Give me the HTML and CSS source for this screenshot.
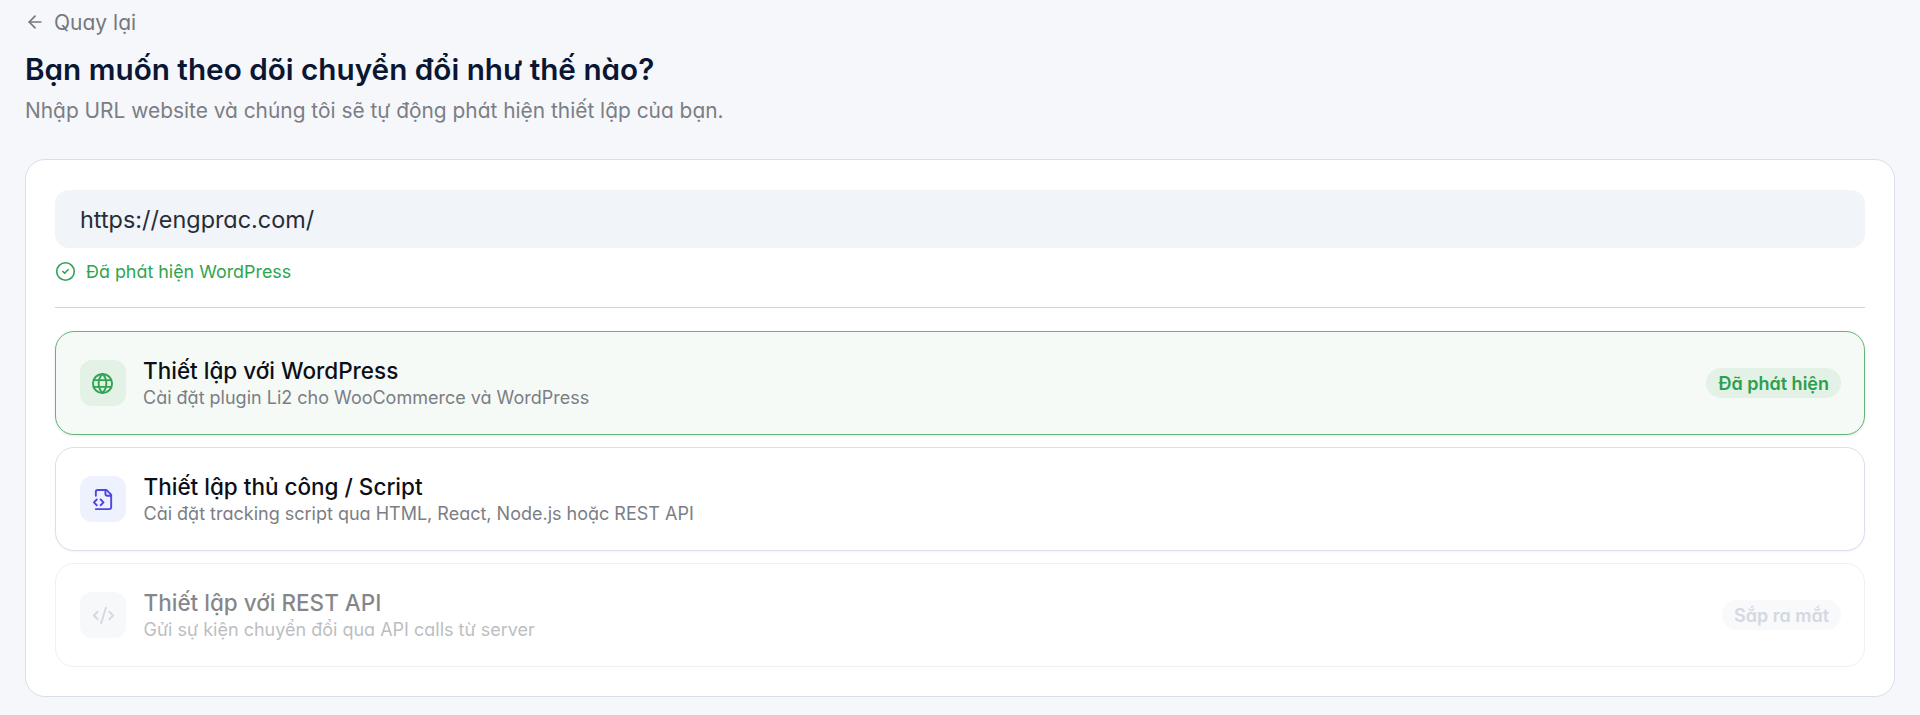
FILE: index.html
```html
<!DOCTYPE html>
<html lang="vi">
<head>
    <meta charset="UTF-8">
    <meta name="viewport" content="width=device-width, initial-scale=1.0">
    <title>Theo dõi chuyển đổi</title>
    <link rel="stylesheet" href="styles.css">
</head>
<body>

    <a class="back-link" href="#">
        <svg class="back-icon" viewBox="0 0 24 24"><path d="m12 19-7-7 7-7"/><path d="M19 12H5"/></svg>
        <span>Quay lại</span>
    </a>

    <h1>Bạn muốn theo dõi chuyển đổi như thế nào?</h1>
    <p class="subtitle">Nhập URL website và chúng tôi sẽ tự động phát hiện thiết lập của bạn.</p>

    <div class="card">
        <input class="url-input" type="text" value="https://engprac.com/">

        <div class="status">
            <svg class="status-icon" viewBox="0 0 24 24"><circle cx="12" cy="12" r="10"/><path d="m9 12 2 2 4-4"/></svg>
            <span>Đã phát hiện WordPress</span>
        </div>

        <hr class="divider">

        <div class="options">
            <div class="option selected">
                <div class="option-icon green">
                    <svg viewBox="0 0 24 24"><circle cx="12" cy="12" r="10"/><path d="M12 2a14.5 14.5 0 0 0 0 20 14.5 14.5 0 0 0 0-20"/><path d="M2.8 8.5h18.4"/><path d="M2.8 15.5h18.4"/></svg>
                </div>
                <div class="option-text">
                    <div class="option-title">Thiết lập với WordPress</div>
                    <div class="option-desc">Cài đặt plugin Li2 cho WooCommerce và WordPress</div>
                </div>
                <span class="badge green">Đã phát hiện</span>
            </div>

            <div class="option">
                <div class="option-icon blue">
                    <svg viewBox="0 0 24 24"><path d="M4 22h14a2 2 0 0 0 2-2V7l-5-5H6a2 2 0 0 0-2 2v4"/><path d="M14 2v4a2 2 0 0 0 2 2h4"/><path d="m5 12-3 3 3 3"/><path d="m9 18 3-3-3-3"/></svg>
                </div>
                <div class="option-text">
                    <div class="option-title">Thiết lập thủ công / Script</div>
                    <div class="option-desc">Cài đặt tracking script qua HTML, React, Node.js hoặc REST API</div>
                </div>
            </div>

            <div class="option disabled">
                <div class="option-icon gray">
                    <svg viewBox="0 0 24 24"><path d="m18 16 4-4-4-4"/><path d="m6 8-4 4 4 4"/><path d="m14.5 4-5 16"/></svg>
                </div>
                <div class="option-text">
                    <div class="option-title">Thiết lập với REST API</div>
                    <div class="option-desc">Gửi sự kiện chuyển đổi qua API calls từ server</div>
                </div>
                <span class="badge gray">Sắp ra mắt</span>
            </div>
        </div>
    </div>

</body>
</html>
```

FILE: styles.css
```css
* {
    box-sizing: border-box;
}
body {
    margin: 0;
    padding: 10px 25px 0;
    background-color: #f5f7fa;
    font-family: Inter, "Noto Sans", sans-serif;
    font-feature-settings: "cv11";
    color: #0f172a;
}
svg {
    fill: none;
    stroke: currentColor;
    stroke-width: 2;
    stroke-linecap: round;
    stroke-linejoin: round;
}
.back-link {
    display: flex;
    align-items: center;
    gap: 9px;
    height: 24px;
    color: #75787f;
    font-size: 21px;
    text-decoration: none;
}
.back-icon {
    width: 20px;
    height: 20px;
}
h1 {
    margin: 16px 0 0;
    font-size: 29.7px;
    line-height: 38px;
    font-weight: 600;
    color: #0b1633;
}
.subtitle {
    margin: 9px 0 0;
    font-size: 20.9px;
    line-height: 28px;
    color: #7b7e85;
}
.card {
    margin-top: 34px;
    padding: 30px 29px 29px;
    background-color: #fff;
    border: 1px solid #d8deea;
    border-radius: 20px;
}
.url-input {
    display: block;
    width: 100%;
    height: 58px;
    padding: 0 25px;
    border: none;
    border-radius: 14px;
    background-color: #f1f4f9;
    font-family: inherit;
    font-feature-settings: inherit;
    font-size: 23.4px;
    color: #272d38;
}
.status {
    display: flex;
    align-items: center;
    gap: 10px;
    height: 24px;
    margin-top: 11px;
    font-size: 17.9px;
    color: #2fa551;
}
.status-icon {
    width: 21px;
    height: 21px;
    stroke-width: 1.9;
}
.divider {
    margin: 24px 0 23px;
    border: none;
    border-top: 1px solid #ccd3e0;
}
.options {
    display: flex;
    flex-direction: column;
    gap: 12px;
}
.option {
    display: flex;
    align-items: center;
    gap: 17.5px;
    height: 104px;
    padding: 0 23px 0 24px;
    background-color: #fff;
    border: 1px solid #dadfeb;
    border-radius: 19px;
    box-shadow: 0 1px 2px rgba(15, 23, 42, 0.05);
}
.option.selected {
    padding: 0 23px 0 23.5px;
    background-color: #f5faf6;
    border: 1.5px solid #64b57a;
    box-shadow: 0 1px 3px rgba(15, 23, 42, 0.1);
}
.option.disabled {
    opacity: 0.5;
    border-color: #dde2ea;
    box-shadow: none;
}
.option-icon {
    display: flex;
    align-items: center;
    justify-content: center;
    flex-shrink: 0;
    width: 46px;
    height: 46px;
    border-radius: 12px;
}
.option-icon svg {
    width: 23px;
    height: 23px;
}
.option-icon.green {
    background-color: #e3f1e6;
    color: #2fa551;
}
.option-icon.blue {
    background-color: #eef2ff;
    color: #5046e5;
}
.option-icon.gray {
    background-color: #eff2f7;
    color: #a9b2c4;
}
.option-text {
    flex: 1;
}
.option-title {
    font-size: 22.5px;
    line-height: 28px;
    font-weight: 500;
    color: #0c0f17;
}
.option-desc {
    margin-top: 1px;
    font-size: 18px;
    line-height: 24px;
    color: #7b7e85;
}
.badge {
    display: flex;
    align-items: center;
    height: 30px;
    padding: 0 12px;
    border-radius: 15px;
    font-size: 18px;
    font-weight: 600;
}
.badge.green {
    background-color: #e3f1e6;
    color: #2c9f4e;
}
.badge.gray {
    background-color: #f2f4f8;
    color: #a9b2c4;
}
```
